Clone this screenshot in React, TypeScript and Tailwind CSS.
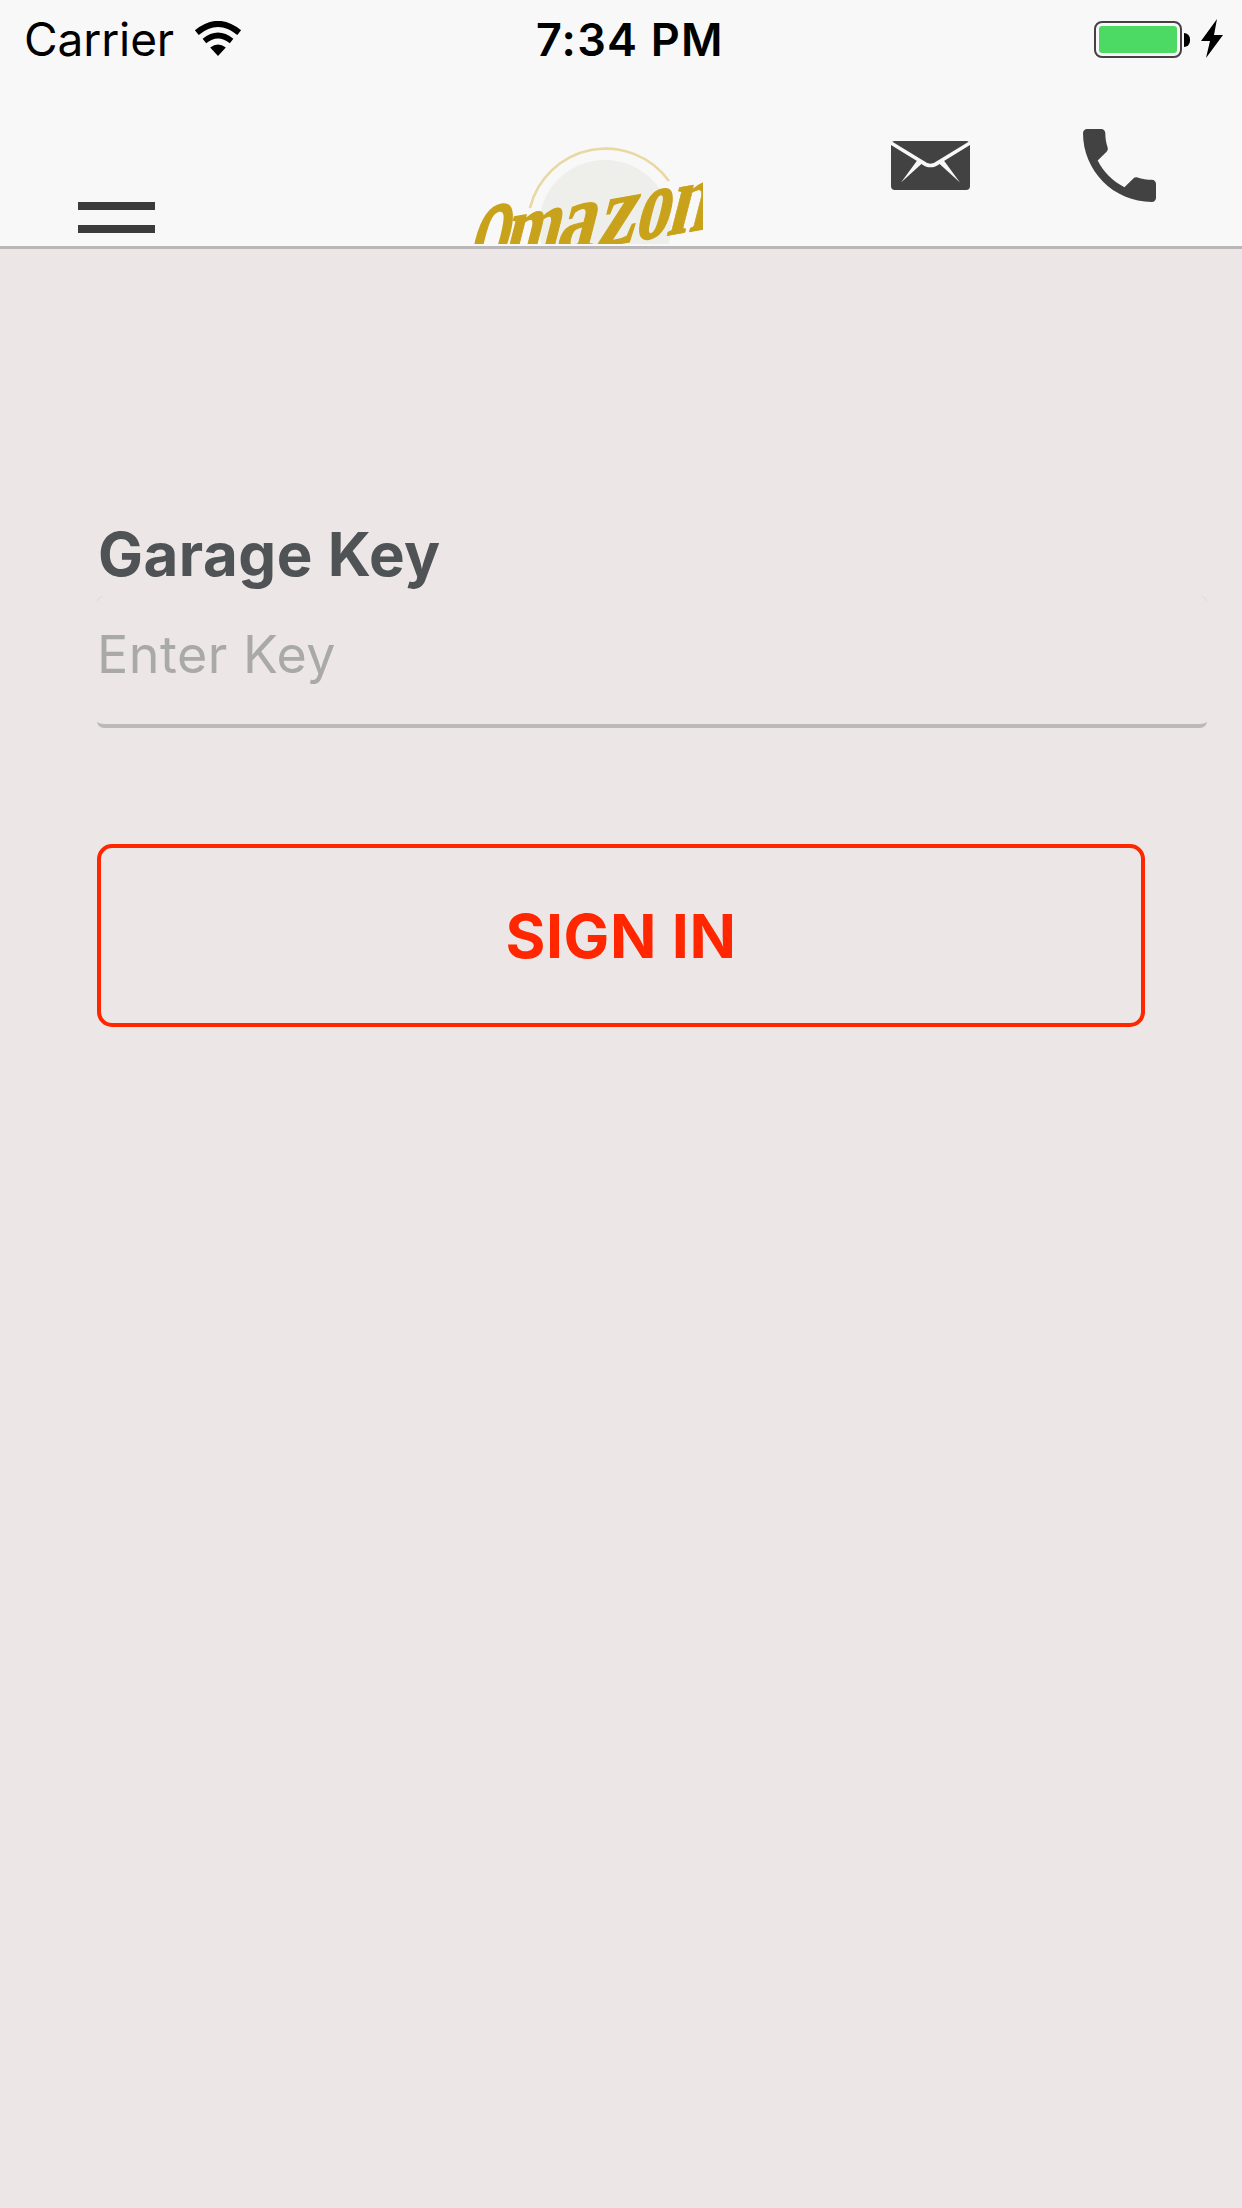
import React from "react";

type Glyph = { char: string; x: number; y: number; size: number; sx: number; weight: number };

const logoGlyphs: Glyph[] = [
  { char: "O", x: -4, y: 131, size: 90, sx: 0.54, weight: 3.5 },
  { char: "m", x: 31, y: 122, size: 93, sx: 0.72, weight: 1.4 },
  { char: "a", x: 84, y: 114, size: 96, sx: 0.8, weight: 1.4 },
  { char: "z", x: 125, y: 108, size: 99, sx: 0.85, weight: 1.4 },
  { char: "o", x: 163, y: 101, size: 99, sx: 0.68, weight: 1.6 },
  { char: "n", x: 195, y: 96, size: 100, sx: 0.78, weight: 0.8 },
];

function WifiIcon() {
  return (
    <svg className="ml-[20px] mt-[21px] h-[35px] w-[48px]" viewBox="0 0 48 35">
      <path d="M2.8 11.6 Q24 -5.8 45.2 11.6" fill="none" stroke="#000" strokeWidth="6" />
      <path d="M10.4 20 Q24 9 37.6 20" fill="none" stroke="#000" strokeWidth="5.6" />
      <path d="M16.2 26.5 Q24 20.5 31.8 26.5 L24 35 Z" />
    </svg>
  );
}

function Logo() {
  return (
    <svg className="ml-[315px] mt-[60px] h-[104px] w-[233px]" viewBox="0 0 233 104">
      <circle cx="135" cy="86" r="66" fill="#eeefeb" />
      <path d="M60 68 A78 78 0 0 1 199 41" fill="none" stroke="#e8d9a3" strokeWidth="2.6" />
      <g fill="#c9a21b" stroke="#c9a21b" fontFamily="Liberation Serif, serif" fontWeight="700">
        {logoGlyphs.map((g, i) => (
          <text
            key={i}
            fontSize={g.size}
            strokeWidth={g.weight}
            transform={`translate(${g.x} ${g.y}) skewY(-10) skewX(-15) scale(${g.sx} 1)`}
          >
            {g.char}
          </text>
        ))}
      </g>
    </svg>
  );
}

function MailIcon() {
  return (
    <svg className="ml-[188px] mt-[61px] h-[49px] w-[79px]" viewBox="0 0 79 49">
      <rect width="79" height="49" rx="4" fill="#424242" />
      <path d="M0 2 L31 21 Q39.500 28 48 21 L79 2" fill="none" stroke="#f8f8f8" strokeWidth="3.6" />
      <path d="M26.500 19 L31.500 22 L10 41.500 Z M52.500 19 L47.500 22 L69 41.500 Z" fill="#f8f8f8" />
    </svg>
  );
}

function PhoneIcon() {
  return (
    <svg className="ml-[113px] mt-[49px] h-[73px] w-[73px]" viewBox="3 3 18 18" preserveAspectRatio="none" fill="#424242">
      <path d="M6.620 10.790c1.440 2.830 3.760 5.140 6.590 6.590l2.200-2.200c.270-.270.670-.360 1.020-.240 1.120.370 2.330.570 3.570.570.550 0 1 .450 1 1V20c0 .550-.450 1-1 1-9.390 0-17-7.610-17-17 0-.550.450-1 1-1h3.500c.550 0 1 .450 1 1 0 1.250.200 2.450.570 3.570.110.350.030.740-.250 1.020l-2.200 2.200z" />
    </svg>
  );
}

export default function App() {
  return (
    <div className="flex h-[2208px] w-[1242px] flex-col overflow-hidden bg-[#ece7e6] font-['Inter',sans-serif]">
      <header className="h-[249px] shrink-0 border-b-[3px] border-[#b9b7b7] bg-[#f8f8f8]">
        <div className="grid h-[80px] grid-cols-3 text-black">
          <div className="flex items-start pl-[24px]">
            <span className="mt-[11px] text-[46px] leading-[56px] tracking-[-0.1px]">Carrier</span>
            <WifiIcon />
          </div>
          <div className="mt-[12px] pl-[122px] text-[45px] font-semibold leading-[56px] tracking-[1.2px] whitespace-nowrap">
            7:34 PM
          </div>
          <div className="flex items-start justify-end pr-[18px]">
            <div className="mt-[21px] h-[37px] w-[88px] rounded-[8px] border-[2.500px] border-[#483f46] p-[3px]">
              <div className="h-full w-full rounded-[3px] bg-[#4cd964]" />
            </div>
            <div className="ml-[2px] mt-[33px] h-[14px] w-[6px] rounded-r-[6px] bg-black" />
            <svg className="ml-[11px] mt-[19px] h-[40px] w-[23px]" viewBox="0 0 23 40">
              <path d="M16 0 L0 22 H9 L5 39 L22 16 H13 Z" />
            </svg>
          </div>
        </div>
        <div className="flex items-start">
          <div className="ml-[78px] mt-[122px] flex w-[77px] flex-col gap-[15px]">
            <span className="h-[8px] bg-[#3b3b3b]" />
            <span className="h-[8px] bg-[#3b3b3b]" />
          </div>
          <Logo />
          <MailIcon />
          <PhoneIcon />
        </div>
      </header>

      <main className="flex flex-col pl-[97px]">
        <label className="mt-[269px] pl-[1px] text-[60px] font-bold leading-[72px] tracking-[0.5px] text-[#505355]">
          Garage Key
        </label>
        <div className="relative mt-[6px] flex h-[132px] w-[1110px] items-start rounded-[7px] border-b-[4px] border-[#bbb9b9]">
          <span className="absolute left-0 top-0 h-[6px] w-[6px] rounded-tl-[6px] border-l border-t border-[#e2dddc]" />
          <span className="absolute right-0 top-0 h-[6px] w-[6px] rounded-tr-[6px] border-r border-t border-[#e2dddc]" />
          <span className="mt-[27px] text-[52px] leading-[64px] tracking-[0.5px] text-[#a9a9a8]">Enter Key</span>
        </div>
        <button className="mt-[116px] flex h-[183px] w-[1048px] items-center justify-center rounded-[15px] border-[4px] border-[#ff2600] pt-[3px] text-[61px] font-bold tracking-[0.5px] text-[#ff2600]">
          SIGN IN
        </button>
      </main>
    </div>
  );
}
